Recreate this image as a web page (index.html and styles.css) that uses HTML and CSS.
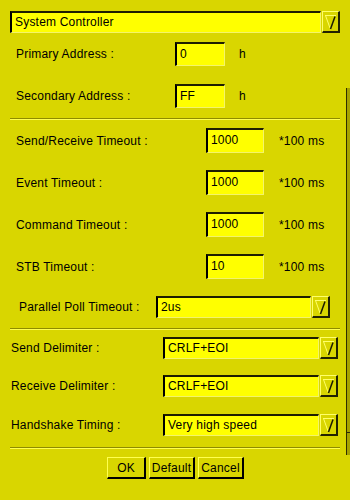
FILE: index.html
```html
<!DOCTYPE html>
<html lang="en">
<head>
    <meta charset="utf-8">
    <title>GPIB Settings</title>
    <link rel="stylesheet" href="styles.css">
</head>
<body>
    <div class="dialog">
        <div class="combo combo-top">
            <div class="combo-field">System Controller</div>
            <div class="combo-btn"><svg width="13" height="16" viewBox="0 0 13 16"><polyline points="1,1.5 12,1.5" stroke="#ffff6a" stroke-width="1" fill="none"/><polyline points="1.5,1.5 6,14" stroke="#ffff6a" stroke-width="1" fill="none"/><polyline points="11,2.5 6.5,15" stroke="#1a1a00" stroke-width="1.5" fill="none"/></svg></div>
        </div>

        <div class="row row-addr first">
            <span class="label">Primary Address :</span>
            <span class="field field-addr">0</span>
            <span class="unit">h</span>
        </div>
        <div class="row row-addr">
            <span class="label">Secondary Address :</span>
            <span class="field field-addr">FF</span>
            <span class="unit">h</span>
        </div>

        <div class="sep sep-1"></div>

        <div class="row row-time first">
            <span class="label">Send/Receive Timeout :</span>
            <span class="field field-time">1000</span>
            <span class="unit">*100 ms</span>
        </div>
        <div class="row row-time">
            <span class="label">Event Timeout :</span>
            <span class="field field-time">1000</span>
            <span class="unit">*100 ms</span>
        </div>
        <div class="row row-time">
            <span class="label">Command Timeout :</span>
            <span class="field field-time">1000</span>
            <span class="unit">*100 ms</span>
        </div>
        <div class="row row-time">
            <span class="label">STB Timeout :</span>
            <span class="field field-time">10</span>
            <span class="unit">*100 ms</span>
        </div>
        <div class="row row-poll">
            <span class="label">Parallel Poll Timeout :</span>
            <div class="combo combo-poll">
                <div class="combo-field">2us</div>
                <div class="combo-btn"><svg width="13" height="16" viewBox="0 0 13 16"><polyline points="1,1.5 12,1.5" stroke="#ffff6a" stroke-width="1" fill="none"/><polyline points="1.5,1.5 6,14" stroke="#ffff6a" stroke-width="1" fill="none"/><polyline points="11,2.5 6.5,15" stroke="#1a1a00" stroke-width="1.5" fill="none"/></svg></div>
            </div>
        </div>

        <div class="sep sep-2"></div>

        <div class="row row-delim first">
            <span class="label">Send Delimiter :</span>
            <div class="combo combo-delim">
                <div class="combo-field">CRLF+EOI</div>
                <div class="combo-btn"><svg width="13" height="16" viewBox="0 0 13 16"><polyline points="1,1.5 12,1.5" stroke="#ffff6a" stroke-width="1" fill="none"/><polyline points="1.5,1.5 6,14" stroke="#ffff6a" stroke-width="1" fill="none"/><polyline points="11,2.5 6.5,15" stroke="#1a1a00" stroke-width="1.5" fill="none"/></svg></div>
            </div>
        </div>
        <div class="row row-delim">
            <span class="label">Receive Delimiter :</span>
            <div class="combo combo-delim">
                <div class="combo-field">CRLF+EOI</div>
                <div class="combo-btn"><svg width="13" height="16" viewBox="0 0 13 16"><polyline points="1,1.5 12,1.5" stroke="#ffff6a" stroke-width="1" fill="none"/><polyline points="1.5,1.5 6,14" stroke="#ffff6a" stroke-width="1" fill="none"/><polyline points="11,2.5 6.5,15" stroke="#1a1a00" stroke-width="1.5" fill="none"/></svg></div>
            </div>
        </div>
        <div class="row row-delim last">
            <span class="label">Handshake Timing :</span>
            <div class="combo combo-delim">
                <div class="combo-field">Very high speed</div>
                <div class="combo-btn"><svg width="13" height="16" viewBox="0 0 13 16"><polyline points="1,1.5 12,1.5" stroke="#ffff6a" stroke-width="1" fill="none"/><polyline points="1.5,1.5 6,14" stroke="#ffff6a" stroke-width="1" fill="none"/><polyline points="11,2.5 6.5,15" stroke="#1a1a00" stroke-width="1.5" fill="none"/></svg></div>
            </div>
        </div>

        <div class="sep sep-3"></div>

        <div class="buttons">
            <button class="btn btn-ok">OK</button>
            <button class="btn">Default</button>
            <button class="btn">Cancel</button>
        </div>

        <!-- edge of the scrollbar behind the dialog -->
        <div class="scroll-edge"><div class="scroll-arrow"></div></div>
    </div>
</body>
</html>
```

FILE: styles.css
```css
* { box-sizing: border-box; }
body { margin: 0; background: #d9d600; color: #000; font-family: "Liberation Sans", Arial, sans-serif; font-size: 12px; letter-spacing: 0.2px; }
.dialog { position: relative; width: 350px; height: 500px; padding: 11px 10px 0 10px; overflow: hidden; }

/* option menus */
.combo { display: flex; height: 22px; }
.combo-top { height: 22px; width: 330px; }
.combo-field { flex: 1; background: #ffff00; border-style: solid; border-width: 2px 1px 1px 2px; border-color: #1e1e00 #f4f46a #f4f46a #000; padding-left: 3px; line-height: 18px; white-space: nowrap; overflow: hidden; }
.combo-btn { width: 18px; margin-left: 1px; border-style: solid; border-width: 1px 2px 2px 1px; border-color: #ffff6a #222200 #222200 #ffff6a; display: flex; align-items: center; justify-content: center; }
.combo-btn svg { display: block; }

/* rows */
.row { display: flex; align-items: center; }
.label { white-space: nowrap; }
.unit { white-space: nowrap; }
.field { background: #ffff00; border-style: solid; border-width: 2px 1px 1px 2px; border-color: #1e1e00 #f4f46a #f4f46a #000; padding-left: 3px; line-height: 20px; }

.row-addr { padding-left: 6px; height: 24px; margin-top: 18px; }
.row-addr.first { margin-top: 9px; }
.row-addr .label { width: 159px; }
.field-addr { width: 50px; height: 24px; }
.row-addr .unit { margin-left: 14px; }

.row-time { padding-left: 6px; height: 25px; margin-top: 17px; }
.row-time.first { margin-top: 8px; }
.row-time .label { width: 190px; }
.field-time { width: 58px; height: 25px; line-height: 21px; }
.row-time .unit { margin-left: 15px; }

.row-poll { padding-left: 9px; height: 22px; margin-top: 17px; }
.row-poll .label { width: 137px; }
.combo-poll { width: 174px; }

.row-delim { padding-left: 1px; height: 22px; margin-top: 16px; }
.row-delim.first { margin-top: 7px; }
.row-delim.last { margin-top: 17px; }
.row-delim .label { width: 152px; }
.combo-delim { width: 175px; }

/* separators */
.sep { width: 330px; height: 2px; border-top: 1px solid #8e8b00; border-bottom: 1px solid #ffff50; }
.sep-1 { margin-top: 10px; }
.sep-2 { margin-top: 10px; }
.sep-3 { margin-top: 11px; }

/* buttons */
.buttons { display: flex; gap: 3px; margin-top: 8px; padding-left: 97px; }
.btn { height: 22px; width: 46px; padding: 0; background: #d9d600; font-family: inherit; font-size: 12px; letter-spacing: 0.2px; color: #000; border-style: solid; border-width: 1px 2px 2px 1px; border-color: #ffff50 #000 #000 #ffff50; }
.btn-ok { width: 39px; }

.scroll-edge { position: absolute; left: 346px; top: 88px; width: 6px; height: 367px; background: #a6a200; border-left: 1px solid #2e2d00; }
.scroll-arrow { position: absolute; left: 0; right: 0; bottom: 0; height: 23px; border-top: 1px solid #2e2d00; }
```
